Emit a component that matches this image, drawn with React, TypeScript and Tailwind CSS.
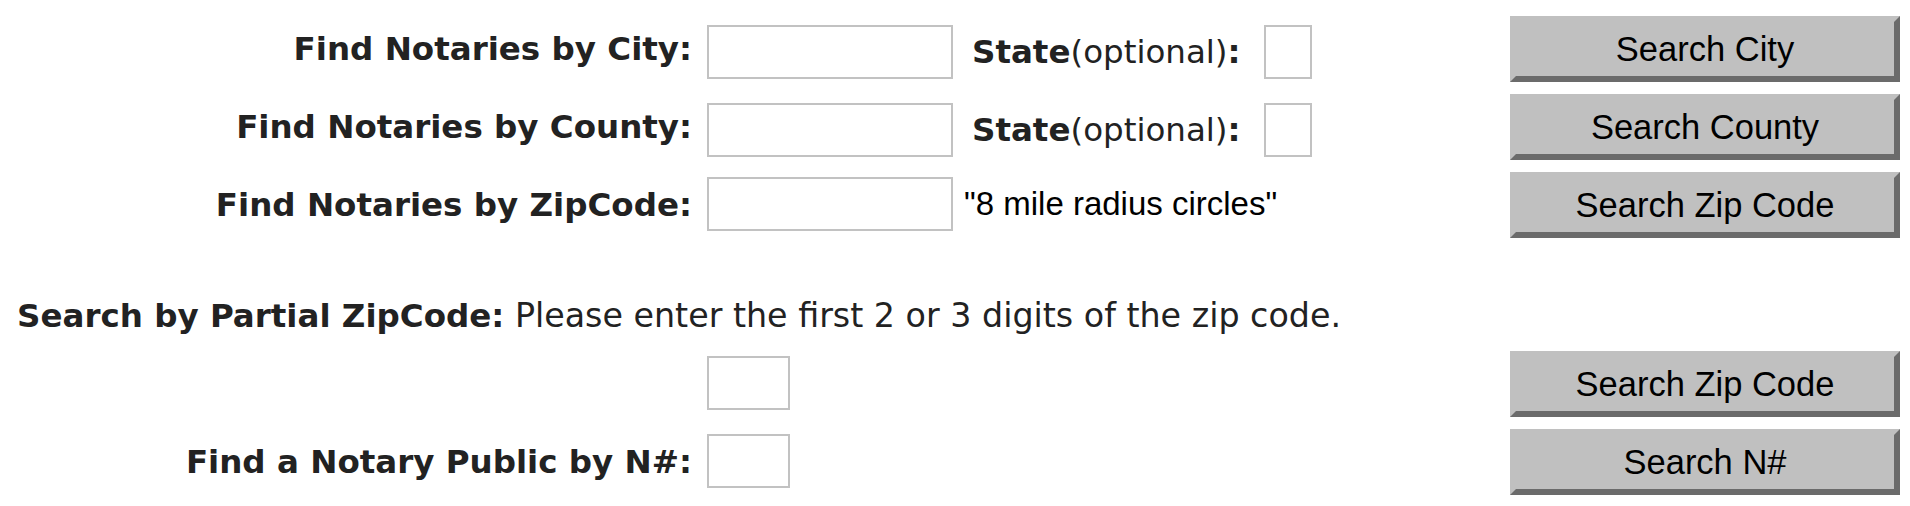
import React from "react";

const labelCls =
  "w-[692px] shrink-0 text-right text-[32.5px] font-bold text-[#222] [font-family:'DejaVu_Sans',Verdana,sans-serif]";
const inputCls = "h-[54px] border-2 border-[#c2c2c2] bg-white outline-none";
const stateCls =
  "text-[32.5px] text-[#222] [font-family:'DejaVu_Sans',Verdana,sans-serif] whitespace-nowrap";

function Btn({ children }: { children: React.ReactNode }) {
  return (
    <button
      type="button"
      className="h-[66px] w-[390px] shrink-0 border-[6px] border-t-[#c0c0c0] border-l-[#c0c0c0] border-b-[#6b6b6b] border-r-[#6b6b6b] bg-[#c0c0c0] text-[34.5px] leading-none text-black [font-family:'Liberation_Sans',Arial,sans-serif]"
    >
      {children}
    </button>
  );
}

function Row({
  label,
  inputW,
  inputShift,
  extra,
  btn,
}: {
  label?: string;
  inputW: string;
  inputShift: string;
  extra?: React.ReactNode;
  btn: string;
}) {
  return (
    <div className="flex h-[66px] items-center">
      <div className={labelCls}>{label}</div>
      <div className={`ml-[15px] flex items-center ${inputShift}`}>
        <input className={`${inputCls} ${inputW}`} />
        {extra}
      </div>
      <div className="flex-1" />
      <Btn>{btn}</Btn>
    </div>
  );
}

function StateField() {
  return (
    <div className="flex items-center">
      <span className={`ml-[19px] ${stateCls}`}>
        <b>State</b>(optional)<b>:</b>
      </span>
      <input className={`ml-[23px] w-[48px] ${inputCls}`} />
    </div>
  );
}

export default function App() {
  return (
    <div className="min-h-[506px] w-[1910px] bg-white pr-[10px] pt-[16px]">
      <div className="flex flex-col gap-[12px]">
        <Row
          label="Find Notaries by City:"
          inputW="w-[246px]"
          inputShift="mt-[6px]"
          extra={<StateField />}
          btn="Search City"
        />
        <Row
          label="Find Notaries by County:"
          inputW="w-[246px]"
          inputShift="mt-[6px]"
          extra={<StateField />}
          btn="Search County"
        />
        <Row
          label="Find Notaries by ZipCode:"
          inputW="w-[246px]"
          inputShift="mb-[2px]"
          extra={
            <span className="ml-[11px] text-[33px] text-black [font-family:'Liberation_Sans',Arial,sans-serif] whitespace-nowrap">
              "8 mile radius circles"
            </span>
          }
          btn="Search Zip Code"
        />
      </div>
      <div className="mt-[58px] mb-[15px] pl-[17px] text-[33.3px] leading-[40px] text-[#222] [font-family:'DejaVu_Sans',Verdana,sans-serif] whitespace-nowrap">
        <b className="text-[32.5px]">Search by Partial ZipCode:</b> Please enter the first 2 or 3 digits of the zip code.
      </div>
      <div className="flex flex-col gap-[12px]">
        <Row inputW="w-[83px]" inputShift="mb-[3px]" btn="Search Zip Code" />
        <Row
          label="Find a Notary Public by N#:"
          inputW="w-[83px]"
          inputShift="mb-[3px]"
          btn="Search N#"
        />
      </div>
    </div>
  );
}
